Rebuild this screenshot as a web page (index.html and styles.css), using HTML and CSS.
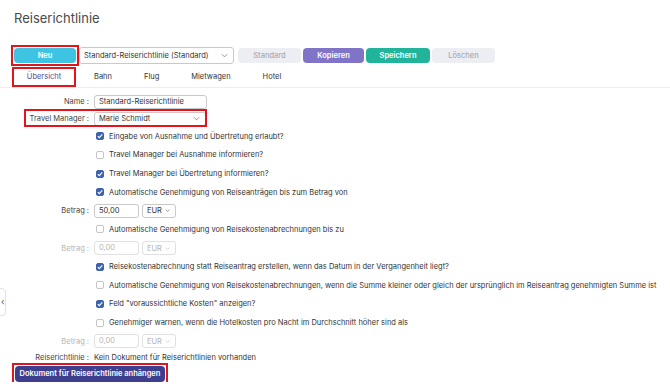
FILE: index.html
```html
<!DOCTYPE html>
<html lang="de">
<head>
  <meta charset="UTF-8">
  <title>Reiserichtlinie</title>
  <link rel="stylesheet" href="styles.css">
</head>
<body>
  <div class="side-tab">&lsaquo;</div>
  <div class="page">
    <h1 class="title">Reiserichtlinie</h1>

    <div class="toolbar">
      <button class="btn btn-new marked">Neu</button>
      <div class="select select-policy">
        <span>Standard-Reiserichtlinie (Standard)</span>
        <svg class="chev" viewBox="0 0 8 5"><path d="M1 1l3 3 3-3" fill="none" stroke="#777" stroke-width="0.9"/></svg>
      </div>
      <button class="btn btn-light">Standard</button>
      <button class="btn btn-copy">Kopieren</button>
      <button class="btn btn-save">Speichern</button>
      <button class="btn btn-light">Löschen</button>
    </div>

    <div class="tabs">
      <div class="tab active marked">Übersicht</div>
      <div class="tab">Bahn</div>
      <div class="tab">Flug</div>
      <div class="tab">Mietwagen</div>
      <div class="tab">Hotel</div>
    </div>

    <div class="form">
      <div class="row row-short">
        <label class="label">Name :</label>
        <div class="input input-name">Standard-Reiserichtlinie</div>
      </div>
      <div class="row row-short row-tm">
        <span class="mark-tm"></span>
        <label class="label">Travel Manager :</label>
        <div class="select select-tm">
          <span>Marie Schmidt</span>
          <svg class="chev" viewBox="0 0 8 5"><path d="M1 1l3 3 3-3" fill="none" stroke="#777" stroke-width="0.9"/></svg>
        </div>
      </div>

      <div class="row"><span></span><div class="check"><span class="box on"></span>Eingabe von Ausnahme und Übertretung erlaubt?</div></div>
      <div class="row"><span></span><div class="check"><span class="box"></span>Travel Manager bei Ausnahme informieren?</div></div>
      <div class="row"><span></span><div class="check"><span class="box on"></span>Travel Manager bei Übertretung informieren?</div></div>
      <div class="row"><span></span><div class="check"><span class="box on"></span>Automatische Genehmigung von Reiseanträgen bis zum Betrag von</div></div>
      <div class="row">
        <label class="label">Betrag :</label>
        <div class="amount">
          <div class="input input-amount">50,00</div>
          <div class="select select-cur">EUR <svg class="chev" viewBox="0 0 8 5"><path d="M1 1l3 3 3-3" fill="none" stroke="#555" stroke-width="0.9"/></svg></div>
        </div>
      </div>
      <div class="row"><span></span><div class="check"><span class="box"></span>Automatische Genehmigung von Reisekostenabrechnungen bis zu</div></div>
      <div class="row disabled">
        <label class="label">Betrag :</label>
        <div class="amount">
          <div class="input input-amount">0,00</div>
          <div class="select select-cur">EUR <svg class="chev" viewBox="0 0 8 5"><path d="M1 1l3 3 3-3" fill="none" stroke="#bbb" stroke-width="0.9"/></svg></div>
        </div>
      </div>
      <div class="row"><span></span><div class="check"><span class="box on"></span>Reisekostenabrechnung statt Reiseantrag erstellen, wenn das Datum in der Vergangenheit liegt?</div></div>
      <div class="row"><span></span><div class="check"><span class="box"></span>Automatische Genehmigung von Reisekostenabrechnungen, wenn die Summe kleiner oder gleich der ursprünglich im Reiseantrag genehmigten Summe ist</div></div>
      <div class="row"><span></span><div class="check"><span class="box on"></span>Feld "voraussichtliche Kosten" anzeigen?</div></div>
      <div class="row"><span></span><div class="check"><span class="box"></span>Genehmiger warnen, wenn die Hotelkosten pro Nacht im Durchschnitt höher sind als</div></div>
      <div class="row disabled">
        <label class="label">Betrag :</label>
        <div class="amount">
          <div class="input input-amount">0,00</div>
          <div class="select select-cur">EUR <svg class="chev" viewBox="0 0 8 5"><path d="M1 1l3 3 3-3" fill="none" stroke="#bbb" stroke-width="0.9"/></svg></div>
        </div>
      </div>
      <div class="row row-doc">
        <label class="label">Reiserichtlinie :</label>
        <div class="doc-text">Kein Dokument für Reiserichtlinien vorhanden</div>
      </div>
    </div>

    <button class="btn btn-attach marked">Dokument für Reiserichtlinie anhängen</button>
  </div>
</body>
</html>
```

FILE: styles.css
```css
body {
  font-family: Inter, "Noto Sans", sans-serif;
  font-size: 7.5px;
  color: #333;
  margin: 0;
  padding: 0;
  background: #fff;
}

.page {
  padding: 10px 0 0 14px;
}

.title {
  font-size: 13px;
  font-weight: 400;
  color: #4a4a4a;
  margin: 0;
  line-height: 16px;
}

/* red annotation frames */
.marked {
  position: relative;
}

.marked::after {
  content: "";
  position: absolute;
  inset: -3px;
  border: 2px solid #e3141b;
}

.toolbar {
  display: flex;
  align-items: center;
  margin-top: 20px;
  height: 18px;
}

.btn {
  font-family: inherit;
  font-size: 7.5px;
  font-weight: 600;
  border: 0;
  border-radius: 4px;
  height: 15px;
  padding: 0;
  color: #fff;
  white-space: nowrap;
}

.btn-new {
  width: 62px;
  background: #3fc3e3;
  margin-right: 3px;
}

.btn-light {
  width: 63px;
  background: #eceef3;
  color: #a9abb3;
  font-weight: 500;
}

.btn-copy {
  width: 61px;
  background: #7f74c8;
  margin: 0 2px;
}

.btn-save {
  width: 64px;
  background: #22b49b;
  margin-right: 2px;
}

.select {
  display: flex;
  align-items: center;
  justify-content: space-between;
  border: 1px solid #c9c9c9;
  border-radius: 3px;
  padding: 0 5px 0 4px;
  box-sizing: border-box;
  background: #fff;
}

.select-policy {
  width: 155px;
  height: 17px;
  margin-right: 4px;
}

.chev {
  width: 7px;
  height: 5px;
}

.tabs {
  display: flex;
  margin-top: 5px;
  border-bottom: 1px solid #eeeef2;
  margin-left: -14px;
  padding-left: 14px;
}

.tab {
  height: 18px;
  line-height: 16px;
  text-align: center;
  padding: 0 16px;
  border-bottom: 2px solid transparent;
  box-sizing: border-box;
  color: #333;
}

.tab.active {
  width: 60px;
  padding: 0;
  color: #4c4a93;
  border-bottom-color: #a9a8c9;
  margin-right: 4px;
}

.tab.active::after {
  inset: -2px;
}

.form {
  margin-top: 5px;
  margin-left: -14px;
}

.row {
  display: grid;
  grid-template-columns: 89px 1fr;
  column-gap: 5px;
  align-items: center;
  height: 18.64px;
  position: relative;
}

.row-short {
  height: 17px;
}

.row-doc {
  height: 14px;
}

.label {
  text-align: right;
  color: #444;
}

.input {
  height: 14px;
  line-height: 12px;
  border: 1px solid #c9c9c9;
  border-radius: 3px;
  box-sizing: border-box;
  padding-left: 4px;
  color: #333;
}

.input-name {
  width: 113px;
}

.select-tm {
  width: 112px;
  height: 14px;
}

.mark-tm {
  position: absolute;
  left: 24px;
  top: -1px;
  width: 183px;
  height: 18px;
  border: 2px solid #e3141b;
  box-sizing: border-box;
}

.check {
  display: flex;
  align-items: center;
  padding-left: 2px;
  white-space: nowrap;
}

.box {
  width: 8px;
  height: 8px;
  border: 1px solid #c4c4c4;
  border-radius: 2px;
  box-sizing: border-box;
  margin-right: 5px;
  flex-shrink: 0;
}

.box.on {
  background: #3d63b0 url("data:image/svg+xml,%3Csvg xmlns='http://www.w3.org/2000/svg' viewBox='0 0 8 8'%3E%3Cpath d='M1.8 4.1l1.5 1.5 3-3.2' fill='none' stroke='white' stroke-width='1.1'/%3E%3C/svg%3E") center / 8px 8px no-repeat;
  border-color: #3d63b0;
}

.amount {
  display: flex;
  gap: 3px;
}

.input-amount {
  width: 45px;
}

.select-cur {
  width: 34px;
  height: 14px;
  justify-content: flex-start;
  gap: 3px;
  color: #333;
}

.disabled .label,
.disabled .input,
.disabled .select-cur {
  color: #b4b4b4;
}

.disabled .input,
.disabled .select-cur {
  border-color: #e0e0e0;
}

.btn-attach {
  display: block;
  margin-top: 1px;
  margin-left: 1px;
  width: 150px;
  height: 16px;
  background: #3e3e8e;
  font-weight: 600;
}

.side-tab {
  position: absolute;
  left: -1px;
  top: 288px;
  width: 7px;
  height: 28px;
  border: 1px solid #e2e2e2;
  border-radius: 0 4px 4px 0;
  font-size: 9px;
  line-height: 26px;
  color: #555;
  text-align: left;
  padding-left: 1px;
  box-sizing: border-box;
}
```
